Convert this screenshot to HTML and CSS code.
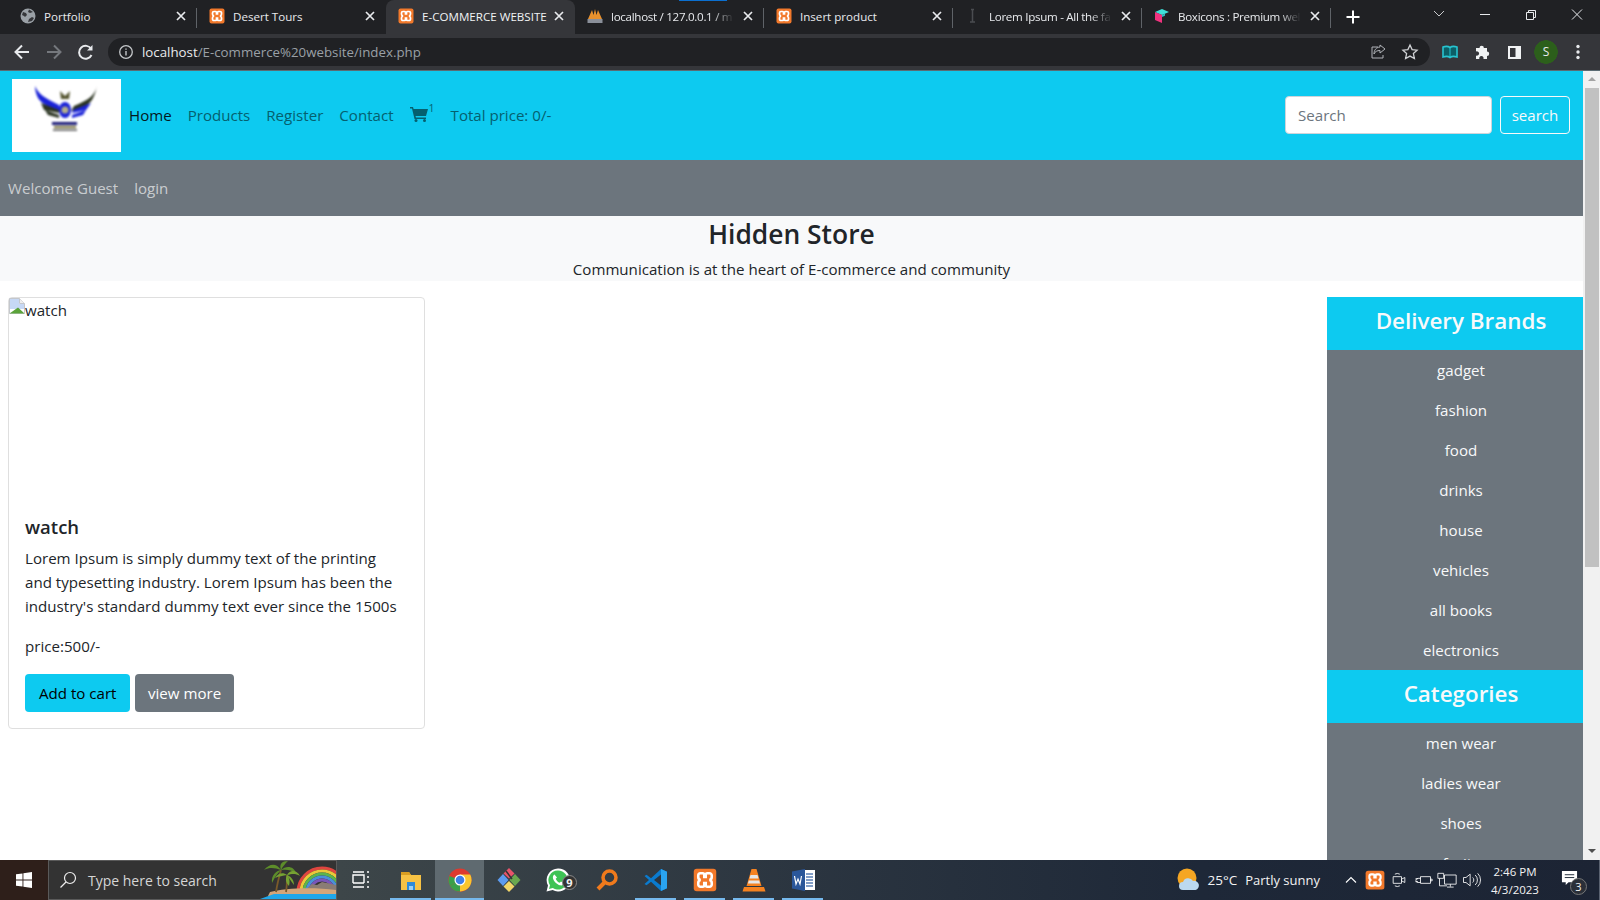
FILE: index.html
```html
<!DOCTYPE html>
<html lang="en">
<head>
  <meta charset="UTF-8">
  <title>E-COMMERCE WEBSITE</title>
  <link rel="stylesheet" href="styles.css">
</head>
<body>

  <svg class="defs" aria-hidden="true">
    <symbol id="xampp" viewBox="0 0 16 16">
      <rect x="0.5" y="0.5" width="15" height="15" rx="2" fill="#f2792b"/>
      <path d="M5 3.5h1.5a1 1 0 0 1 1 1V6h1V4.5a1 1 0 0 1 1-1H11A1.5 1.5 0 0 1 12.500 5v1a2 2 0 0 1-1.500 2a2 2 0 0 1 1.500 2v1a1.500 1.500 0 0 1-1.500 1.500H9.500a1 1 0 0 1-1-1V10h-1v1.500a1 1 0 0 1-1 1H5A1.500 1.500 0 0 1 3.500 11v-1a2 2 0 0 1 1.500-2a2 2 0 0 1-1.500-2V5A1.500 1.500 0 0 1 5 3.500z" fill="none" stroke="#fff" stroke-width="1.700"/>
    </symbol>
    <symbol id="close" viewBox="0 0 12 12">
      <path d="M2 2l8 8M10 2l-8 8" stroke="#e8eaed" stroke-width="1.700" fill="none"/>
    </symbol>
  </svg>

  <!-- browser chrome -->
  <div class="tabstrip">
    <div class="tab sep">
      <svg class="favicon" viewBox="0 0 16 16"><circle cx="8" cy="8" r="7.500" fill="#9aa0a6"/><path d="M3 4l3 1 1 2-2 2-1-1-2-1zM8 14l1-3 3-2 2 1-2 3zM9 1.500L8 4l2 1 3-1z" fill="#35363a"/></svg>
      <span class="tab-title">Portfolio</span>
      <svg class="tab-close"><use href="#close"/></svg>
    </div>
    <div class="tab">
      <svg class="favicon"><use href="#xampp"/></svg>
      <span class="tab-title">Desert Tours</span>
      <svg class="tab-close"><use href="#close"/></svg>
    </div>
    <div class="tab active">
      <svg class="favicon"><use href="#xampp"/></svg>
      <span class="tab-title">E-COMMERCE WEBSITE</span>
      <svg class="tab-close"><use href="#close"/></svg>
    </div>
    <div class="tab sep loading">
      <svg class="favicon" viewBox="0 0 16 16"><path d="M1 11L5 2l1.500 5L8 1l1.500 6L11 2l4 9z" fill="#e8912d"/><rect x="0.500" y="11" width="15" height="4" fill="#8a8f99"/></svg>
      <span class="tab-title fade">localhost / 127.0.0.1 / m</span>
      <svg class="tab-close"><use href="#close"/></svg>
    </div>
    <div class="tab sep">
      <svg class="favicon"><use href="#xampp"/></svg>
      <span class="tab-title">Insert product</span>
      <svg class="tab-close"><use href="#close"/></svg>
    </div>
    <div class="tab sep">
      <svg class="favicon" viewBox="0 0 16 16"><path d="M6 1.500h3M7.500 1.500v12.500M5 14h5" stroke="#4a4c50" stroke-width="1.500" fill="none"/></svg>
      <span class="tab-title fade">Lorem Ipsum - All the fa</span>
      <svg class="tab-close"><use href="#close"/></svg>
    </div>
    <div class="tab sep">
      <svg class="favicon" viewBox="0 0 16 16"><path d="M1 4l7-3 7 3-7 3z" fill="#3fdfd8"/><path d="M1 4l7 3v8l-7-3z" fill="#f0327e"/><path d="M8 7l3-1.300v2L8 9z" fill="#2fb9c4"/></svg>
      <span class="tab-title fade">Boxicons : Premium wel</span>
      <svg class="tab-close"><use href="#close"/></svg>
    </div>
    <svg class="new-tab" viewBox="0 0 14 14"><path d="M7 0.500v13M0.500 7h13" stroke="#fff" stroke-width="2"/></svg>
    <div class="win-controls">
      <svg viewBox="0 0 46 30"><path d="M18 11l5 5 5-5" stroke="#c8cacc" fill="none"/></svg>
      <svg viewBox="0 0 46 30"><path d="M18 14.500h10" stroke="#e8eaed" fill="none"/></svg>
      <svg viewBox="0 0 46 30"><path d="M18.500 12.500h7v7h-7zM20.500 12.500v-2h7v7h-2" stroke="#e8eaed" fill="none"/></svg>
      <svg viewBox="0 0 46 30"><path d="M18 9.500l10 10M28 9.500l-10 10" stroke="#e8eaed" fill="none"/></svg>
    </div>
  </div>

  <div class="toolbar">
    <svg class="tool" viewBox="0 0 32 32"><path d="M23 16H10M16 9.500L9.500 16l6.500 6.500" stroke="#e8eaed" stroke-width="2" fill="none"/></svg>
    <svg class="tool" viewBox="0 0 32 32"><path d="M9 16h13M16 9.500l6.500 6.500-6.500 6.500" stroke="#75787d" stroke-width="2" fill="none"/></svg>
    <svg class="tool" viewBox="0 0 32 32"><path d="M21.500 19a6.500 6.500 0 1 1-.300-6" stroke="#e8eaed" stroke-width="2" fill="none"/><path d="M22.500 9v5.500H17z" fill="#e8eaed"/></svg>
    <div class="omnibox">
      <svg class="info" viewBox="0 0 16 16"><circle cx="8" cy="8" r="6.300" stroke="#c4c7ca" stroke-width="1.300" fill="none"/><path d="M8 7v4.500M8 4.500v1.300" stroke="#c4c7ca" stroke-width="1.400"/></svg>
      <span class="url"><b>localhost</b>/E-commerce%20website/index.php</span>
      <svg class="tool" viewBox="0 0 32 32"><path d="M16 11h-6v11h11v-3" stroke="#b0b3b8" fill="none"/><path d="M18 9l5 4-5 4v-2.500c-3 0-5 1-6 3.500 0-4 2-6.500 6-7z" stroke="#b0b3b8" fill="none"/></svg>
      <svg class="tool" viewBox="0 0 32 32"><path d="M16 9l2.100 4.600 5 .600-3.700 3.400 1 5L16 20.100l-4.400 2.500 1-5-3.700-3.400 5-.600z" stroke="#d0d2d5" stroke-width="1.300" fill="none"/></svg>
    </div>
    <div class="tool-right">
      <svg class="tool" viewBox="0 0 32 32"><path d="M9 11c3-1 5-1 7 .500 2-1.500 4-1.500 7-.500v10c-3-1-5-1-7 .500-2-1.500-4-1.500-7-.500z" stroke="#27c4d0" stroke-width="1.600" fill="#0c5f66"/><path d="M16 11.500v10" stroke="#27c4d0"/></svg>
      <svg class="tool" viewBox="0 0 32 32"><path d="M10 12h3.500a2.200 2.200 0 1 1 4.400 0H21v3.500a2.200 2.200 0 1 1 0 4.400V23h-3.600a2.200 2.200 0 1 0-4 0H10v-3.500a2.200 2.200 0 1 0 0-4z" fill="#f1f3f4"/></svg>
      <svg class="tool" viewBox="0 0 32 32"><rect x="10" y="10" width="13" height="13" fill="#f1f3f4"/><rect x="12" y="12" width="5.500" height="9" fill="#35363a"/></svg>
      <span class="avatar">S</span>
      <svg class="tool" viewBox="0 0 32 32"><circle cx="16" cy="10.500" r="1.700" fill="#e8eaed"/><circle cx="16" cy="16" r="1.700" fill="#e8eaed"/><circle cx="16" cy="21.500" r="1.700" fill="#e8eaed"/></svg>
    </div>
  </div>

  <!-- the page itself -->
  <div class="viewport">
    <div class="page">
      <nav class="navbar">
        <svg class="logo" viewBox="0 0 109 73">
          <g class="logo-art">
            <path d="M23 7c3 8 10 12 24 19l2 6C38 29 30 25 26 19c-2-4-3-8-3-12z" fill="#1a22d8"/>
            <path d="M85 7c-2 9-8 14-23 20l-3 5c13-3 19-7 22-13 2-4 3-8 4-12z" fill="#2a3320"/>
            <path d="M29 24l18 7v3l-15-3zM33 31l14 5v3l-11-3z" fill="#2a3320"/>
            <path d="M79 24l-18 7-1 3 14-3zM74 31l-14 5v3l11-3z" fill="#1a22d8"/>
            <ellipse cx="53" cy="31" rx="6" ry="8" fill="#1a22d8"/>
            <circle cx="53" cy="31" r="3.500" fill="#b5b08a"/>
            <path d="M48 12l5 5 5-5-1 8h-8z" fill="#55552f"/>
            <rect x="40" y="43" width="25" height="3" fill="#1c1c78"/>
            <rect x="42" y="47" width="22" height="2" fill="#77703a"/>
            <rect x="41" y="50" width="24" height="2" fill="#777"/>
          </g>
        </svg>
        <ul class="nav-links">
          <li class="current">Home</li>
          <li>Products</li>
          <li>Register</li>
          <li>Contact</li>
          <li class="cart">
            <svg viewBox="0 0 18 16"><path d="M0 1h3l.600 2H18l-2 7H5.500L6 11.500h10V13H4.500L2 2.500H0z" fill="#05606f"/><circle cx="6" cy="14.500" r="1.500" fill="#05606f"/><circle cx="14.500" cy="14.500" r="1.500" fill="#05606f"/></svg>
            <sup>1</sup>
          </li>
          <li>Total price: 0/-</li>
        </ul>
        <form class="search-form">
          <input class="search-input" type="text" placeholder="Search">
          <button class="search-btn" type="button">search</button>
        </form>
      </nav>

      <div class="subnav">
        <span>Welcome Guest</span>
        <span>login</span>
      </div>

      <header class="hero">
        <h1>Hidden Store</h1>
        <p>Communication is at the heart of E-commerce and community</p>
      </header>

      <div class="content">
        <main class="products">
          <article class="card">
            <div class="card-img">
              <svg viewBox="0 0 16 16"><path d="M.5.500h10l5 5V15.500H.5z" fill="#fff" stroke="#c4c7cc"/><path d="M1 1h9v5h5v5H1z" fill="#c6d8f5"/><path d="M.5 15.500L9 9.500l6.500 6z" fill="#5ba33a"/><path d="M10.500.500v5h5" fill="#eee" stroke="#c4c7cc"/></svg>
              <span>watch</span>
            </div>
            <div class="card-body">
              <h5>watch</h5>
              <p class="card-text">Lorem Ipsum is simply dummy text of the printing and typesetting industry. Lorem Ipsum has been the industry's standard dummy text ever since the 1500s</p>
              <p class="price">price:500/-</p>
              <div class="card-actions">
                <a class="btn btn-info">Add to cart</a>
                <a class="btn btn-secondary">view more</a>
              </div>
            </div>
          </article>
        </main>

        <aside class="sidebar">
          <h4>Delivery Brands</h4>
          <ul>
            <li>gadget</li>
            <li>fashion</li>
            <li>food</li>
            <li>drinks</li>
            <li>house</li>
            <li>vehicles</li>
            <li>all books</li>
            <li>electronics</li>
          </ul>
          <h4>Categories</h4>
          <ul>
            <li>men wear</li>
            <li>ladies wear</li>
            <li>shoes</li>
            <li>fruits</li>
          </ul>
        </aside>
      </div>
    </div>

    <div class="scrollbar">
      <span class="arrow-up"></span>
      <span class="thumb"></span>
      <span class="arrow-down"></span>
    </div>
  </div>

  <!-- windows taskbar -->
  <footer class="taskbar">
    <div class="start">
      <svg viewBox="0 0 16 16"><path d="M0 2.300l6.500-.900v6.200H0zM7.400 1.300L16 0v7.600H7.400zM0 8.400h6.500v6.200L0 13.700zM7.400 8.400H16V16l-8.600-1.300z" fill="#fff"/></svg>
    </div>
    <div class="task-search">
      <svg class="lens" viewBox="0 0 18 18"><circle cx="11" cy="7" r="5.500" stroke="#eee" fill="none" stroke-width="1.200"/><path d="M7 11l-5.500 5.500" stroke="#eee" stroke-width="1.300"/></svg>
      <span>Type here to search</span>
      <svg class="beach" viewBox="0 0 76 38">
        <circle cx="62" cy="31" r="24" stroke="#e0453f" stroke-width="3" fill="none"/>
        <circle cx="62" cy="31" r="21" stroke="#ecc83a" stroke-width="3" fill="none"/>
        <circle cx="62" cy="31" r="18" stroke="#5cb44c" stroke-width="3" fill="none"/>
        <circle cx="62" cy="31" r="15" stroke="#4a90d9" stroke-width="3" fill="none"/>
        <circle cx="62" cy="31" r="12" stroke="#7a55b8" stroke-width="3" fill="none"/>
        <path d="M44 30l8-7 5 1 5-3 14 3v6z" fill="#8a7c75"/>
        <path d="M10 31c14-4 44-5 66-2v6H8z" fill="#d4a679"/>
        <path d="M0 38l14-5h62v5z" fill="#1fa7ea"/>
        <path d="M16 31c1-7 3-15 5-22M26 31c1-6 1-12 1-17" stroke="#7a5a2a" stroke-width="1.800" fill="none"/>
        <path d="M21 9C16 1 9 3 4 9c6-3 11-2 17 0zM21 9c-2-6 1-9 7-9-3 3-5 5-7 9zM21 9c5-5 13-4 15 3-5-3-9-4-15-3zM21 9c-5 1-10 5-9 13 3-6 5-9 9-13z" fill="#5d8d2a"/>
        <path d="M27 14c3-6 10-5 13 1-5-3-8-2-13-1zM27 14c-4-3-9-2-12 3 4-2 8-2 12-3zM27 14c-2 4-1 8 2 11 1-4 1-7-2-11zM27 14c3 1 7 4 7 10-3-4-5-7-7-10z" fill="#76a332"/>
      </svg>
    </div>
    <div class="task-apps">
      <div class="app taskview">
        <svg viewBox="0 0 24 24"><path d="M5 4h11M5 15h11M5 15V7h11v8M19 4h2M19 9h2M19 14h2M19 19h2M5 19h11" stroke="#fff" stroke-width="1.400" fill="none"/></svg>
      </div>
      <div class="app open">
        <svg viewBox="0 0 24 24"><path d="M2 4h8l2 3h10v15H2z" fill="#f6c244"/><path d="M2 4h8l2 3H2z" fill="#d99e22"/><rect x="8" y="14" width="8" height="8" fill="#2e8bd8"/><rect x="10" y="18" width="4" height="4" fill="#9bd0f5"/></svg>
      </div>
      <div class="app focused">
        <svg viewBox="0 0 24 24"><circle cx="12" cy="12" r="11.500" fill="#dd3a2f"/><path d="M12 12L2 18a11.500 11.500 0 0 0 10 5.500z" fill="#3aa04a"/><path d="M12 6.500h10.200A11.500 11.500 0 0 1 12 23.500z" fill="#fbc62e"/><path d="M12 12L2 18A11.500 11.500 0 0 1 1.500 8z" fill="#3aa04a"/><circle cx="12" cy="12" r="5.500" fill="#fff"/><circle cx="12" cy="12" r="4.300" fill="#3f7fe8"/></svg>
      </div>
      <div class="app">
        <svg viewBox="0 0 24 24"><path d="M12 0l5.500 5.500-5.500 5-5.500-5z" fill="#e8546a"/><path d="M6 6l5.500 6L6 18 .5 12z" fill="#5d9bef"/><path d="M18 6l5.500 6-5.500 6-5.500-6z" fill="#6aa84f"/><path d="M12 13l5.500 5.500L12 24l-5.500-5.500z" fill="#f2d668"/><path d="M9 3l6 8" stroke="#333" stroke-width="1.500"/></svg>
      </div>
      <div class="app">
        <svg viewBox="0 0 24 24"><path d="M12 .500a11.500 11.500 0 0 0-10 17L.500 23.500l6.200-1.500A11.500 11.500 0 1 0 12 .500z" fill="#fff"/><path d="M12 2.500a9.500 9.500 0 0 0-8 14.700l-1 3.700 3.800-1A9.500 9.500 0 1 0 12 2.500z" fill="#3ec355"/><path d="M8.500 6.500c-1 .500-2 2-1.500 4 .800 3 4 6 7 6.800 2 .500 3.500-.500 4-2l-3-1.800-1.300 1.300c-1.700-.600-3.300-2.200-4-4l1.300-1.300z" fill="#fff"/></svg>
        <span class="app-badge">9</span>
      </div>
      <div class="app">
        <svg viewBox="0 0 24 24"><circle cx="14.500" cy="9.500" r="6.500" stroke="#f07a1c" stroke-width="3.500" fill="none"/><path d="M9.500 14.500L3 21" stroke="#f07a1c" stroke-width="4"/></svg>
      </div>
      <div class="app open">
        <svg viewBox="0 0 24 24"><path d="M17 1l6 2.800v16.400L17 23 7 13.800l-4.500 3.500L.500 16l4.500-4-4.500-4 2-1.300L7 10.200z" fill="#0a7bcf"/><path d="M17 1l6 2.800v16.400L17 23z" fill="#2aa4f0"/><path d="M17 6.500L10 12l7 5.500z" fill="#2b3540"/></svg>
      </div>
      <div class="app open">
        <svg viewBox="0 0 24 24"><use href="#xampp"/></svg>
      </div>
      <div class="app open">
        <svg viewBox="0 0 24 24"><path d="M9.500 1h5l5 17h-15z" fill="#f58220"/><path d="M8.500 7h7l1 3.500h-9zM6.800 12.500h10.400l.800 3H6z" fill="#e6e6e6"/><path d="M2 19h20l1.500 4.500H.5z" fill="#f58220"/></svg>
      </div>
      <div class="app open">
        <svg viewBox="0 0 24 24"><rect x="9" y="2" width="15" height="20" fill="#fff"/><path d="M15 6h7M15 9h7M15 12h7M15 15h7M15 18h7" stroke="#5a7fb5" stroke-width="1.300"/><path d="M1 3.500L14 1v22L1 20.500z" fill="#2b579a"/><path d="M3.500 8l1.500 8 2-5 2 5 1.500-8" stroke="#fff" stroke-width="1.200" fill="none"/></svg>
      </div>
    </div>

    <div class="tray">
      <svg class="weather" viewBox="0 0 24 24"><circle cx="11" cy="10" r="9.500" fill="#f5a623"/><path d="M7 22a4 4 0 0 1 0-8 5.500 5.500 0 0 1 10-1 4.500 4.500 0 0 1 2.500 9z" fill="#bcd9ef"/></svg>
      <span class="temp">25°C</span>
      <span class="forecast">Partly sunny</span>
      <div class="tray-icons">
        <svg viewBox="0 0 24 24"><path d="M6 15l6-6 6 6" stroke="#fff" stroke-width="1.300" fill="none"/></svg>
        <svg viewBox="0 0 24 24"><use href="#xampp"/></svg>
        <svg viewBox="0 0 24 24"><path d="M5 8h10v8H5zM15 11l4-2v6l-4-2zM7 5a6 6 0 0 1 6 0M7 19a6 6 0 0 0 6 0" stroke="#fff" fill="none"/></svg>
        <svg viewBox="0 0 24 24"><path d="M9 8h12v8H9zM21 11h2v2h-2zM9 10H6a2 2 0 0 0 0 5h3M3 10.500h3M3 14h3" stroke="#fff" fill="none"/></svg>
        <svg viewBox="0 0 24 24"><path d="M9 6h14v11H9zM1 4h7v6H1zM3 10v9h9M16 17v3M12 20.500h8" stroke="#fff" fill="none"/></svg>
        <svg viewBox="0 0 24 24"><path d="M3 9h3l5-4v14l-5-4H3zM14 9a4 4 0 0 1 0 6M17 6a8 8 0 0 1 0 12M20 4a11 11 0 0 1 0 16" stroke="#fff" fill="none"/></svg>
      </div>
      <div class="clock">
        <span>2:46 PM</span>
        <span>4/3/2023</span>
      </div>
      <div class="notify">
        <svg viewBox="0 0 18 18"><path d="M1 1h16v12H8l-3 3v-3H1z" fill="#fff"/><path d="M4 5h10M4 8h10" stroke="#1c2635"/></svg>
        <span class="notify-count">3</span>
      </div>
    </div>
  </footer>

</body>
</html>
```

FILE: styles.css
```css
* { box-sizing: border-box; }

html, body { height: 100%; }

body {
  margin: 0;
  width: 1600px;
  height: 900px;
  overflow: hidden;
  display: flex;
  flex-direction: column;
  font-family: "Open Sans", "Noto Sans", sans-serif;
  font-size: 15.100px;
  color: #212529;
  background: #fff;
}

.defs { width: 0; height: 0; position: absolute; }

ul { list-style: none; margin: 0; padding: 0; }

/* tabs */
.tabstrip {
  height: 34px;
  flex: none;
  display: flex;
  align-items: flex-end;
  padding-left: 8px;
  background: #202124;
}

.tab {
  position: relative;
  width: 189px;
  height: 34px;
  flex: none;
  display: flex;
  align-items: center;
  gap: 8px;
  padding: 0 10px 2px 12px;
  color: #e8eaed;
  font-size: 11.600px;
}

.tab.active { background: #35363a; border-radius: 8px 8px 0 0; color: #f1f3f4; }

.sep::after {
  content: "";
  position: absolute;
  right: 0;
  top: 8px;
  height: 20px;
  width: 1px;
  background: #5f6368;
}

.loading::before {
  content: "";
  position: absolute;
  left: 104px;
  top: 0;
  width: 48px;
  height: 1px;
  background: #0b6fd0;
}

.favicon { width: 16px; height: 16px; flex: none; }

.tab-title { flex: 1; min-width: 0; white-space: nowrap; }

.fade {
  letter-spacing: -0.300px;
  -webkit-mask-image: linear-gradient(to right, #000 82%, transparent 100%);
  mask-image: linear-gradient(to right, #000 82%, transparent 100%);
}

.tab-close { width: 12px; height: 12px; flex: none; }

.new-tab { width: 14px; height: 14px; margin: 0 0 10px 15px; flex: none; }

.win-controls {
  margin-left: auto;
  align-self: flex-start;
  display: flex;
}

.win-controls svg { width: 46px; height: 30px; display: block; }

/* address bar */
.toolbar {
  height: 37px;
  flex: none;
  display: flex;
  align-items: center;
  padding: 0 6px 1px 6px;
  background: #35363a;
  border-bottom: 1px solid #5b6b73;
}

.tool { width: 32px; height: 32px; flex: none; }

.omnibox {
  width: 1322px;
  height: 28px;
  margin-left: 6px;
  display: flex;
  align-items: center;
  padding: 0 4px 0 10px;
  border-radius: 14px;
  background: #202124;
}

.info { width: 16px; height: 16px; flex: none; }

.url { flex: 1; margin-left: 8px; font-size: 13.300px; color: #9aa0a6; }

.url b { font-weight: 400; color: #e8eaed; }

.tool-right { display: flex; align-items: center; margin-left: 4px; }

.avatar {
  width: 32px;
  height: 24px;
  display: flex;
  align-items: center;
  justify-content: center;
  font-size: 12px;
  color: #e8eaed;
  background: radial-gradient(circle at center, #2c5f1b 0, #2c5f1b 11.500px, transparent 12px);
}

/* page */
.viewport { flex: 1; min-height: 0; display: flex; }

.page { flex: 1; min-width: 0; overflow: hidden; }

.navbar {
  height: 89px;
  display: flex;
  align-items: center;
  padding: 0 13px 0 12px;
  background: #0dcaf0;
}

.logo { width: 109px; height: 73px; flex: none; background: #fff; }

.logo-art { filter: blur(0.800px); }

.nav-links { display: flex; align-items: center; margin-top: -2px; }

.nav-links li { padding: 8px; color: #05606f; line-height: 24px; }

.nav-links .current { color: #04181d; }

.cart { display: flex; align-items: center; }

.cart svg { width: 18px; height: 16px; margin-top: -2px; }

.cart sup { font-size: 10.500px; line-height: 1; margin: -12px 0 0 1px; }

.search-form { margin: -2px 0 0 auto; display: flex; gap: 8px; }

.search-input {
  width: 207px;
  height: 38px;
  padding: 6px 12px;
  border: 1px solid #ced4da;
  border-radius: 4px;
  font: inherit;
  background: #fff;
}

.search-input::placeholder { color: #6c757d; }

.search-btn {
  width: 70px;
  height: 38px;
  padding: 0;
  border: 1px solid #f8f9fa;
  border-radius: 4px;
  font: inherit;
  color: #f8f9fa;
  background: transparent;
}

.subnav {
  height: 56px;
  display: flex;
  align-items: center;
  gap: 16px;
  padding-left: 8px;
  color: rgba(255, 255, 255, 0.65);
  background: #6c757d;
}

.hero { height: 65px; text-align: center; background: #f8f9fa; }

.hero h1 { margin: 0; font-size: 26.400px; line-height: 36px; font-weight: 600; }

.hero p { margin: 5px 0 0; line-height: 24px; }

.content { display: flex; padding-top: 16px; align-items: flex-start; }

.products { flex: 1; padding-left: 8px; }

.card {
  width: 417px;
  height: 432px;
  display: flex;
  flex-direction: column;
  border: 1px solid #dfdfdf;
  border-radius: 4px;
}

.card-img { height: 201px; flex: none; display: flex; color: #212529; line-height: 24px; }

.card-img svg { width: 16px; height: 16px; flex: none; }

.card-body { padding: 16px; }

.card-body h5 { margin: 0 0 7px; font-size: 18.500px; line-height: 24px; font-weight: 600; }

.card-text { max-width: 373px; margin: 0 0 16px; line-height: 24px; }

.price { margin: 0 0 16px; line-height: 24px; }

.card-actions { display: flex; gap: 5px; }

.btn {
  height: 38px;
  display: flex;
  align-items: center;
  border-radius: 4px;
}

.btn-info { padding: 0 14px; background: #0dcaf0; color: #000; }

.btn-secondary { padding: 0 12.500px; background: #6c757d; color: #fff; }

.sidebar {
  width: 256px;
  flex: none;
  text-align: center;
  color: #f8f9fa;
  background: #6c757d;
}

.sidebar h4 {
  height: 53px;
  margin: 0;
  padding-left: 12px;
  font-size: 22.400px;
  line-height: 47px;
  font-weight: 600;
  background: #0dcaf0;
}

.sidebar li { height: 40px; padding-left: 12px; line-height: 40px; }

.scrollbar {
  width: 17px;
  flex: none;
  display: flex;
  flex-direction: column;
  align-items: center;
  background: #f1f1f1;
}

.arrow-up {
  margin-top: 6px;
  border: 4px solid transparent;
  border-top: 0;
  border-bottom: 4px solid #a3a3a3;
}

.thumb { width: 14px; height: 479px; margin-top: 7px; background: #c1c1c1; }

.arrow-down {
  margin-top: auto;
  margin-bottom: 7px;
  border: 4px solid transparent;
  border-bottom: 0;
  border-top: 4px solid #505050;
}

/* taskbar */
.taskbar {
  height: 40px;
  flex: none;
  display: flex;
  align-items: stretch;
  color: #f3f3f3;
  background: linear-gradient(to right, #3d4649 340px, #2b3540 800px, #1e2838 1200px, #1c2434);
}

.start {
  width: 48px;
  flex: none;
  display: flex;
  align-items: center;
  justify-content: center;
  background: #2e1f1a;
}

.start svg { width: 16px; height: 16px; }

.task-search {
  width: 289px;
  flex: none;
  display: flex;
  align-items: center;
  overflow: hidden;
  border: 1px solid #5a5a5a;
  color: #d6d6d6;
  background: #333;
  font-size: 14px;
}

.lens { width: 18px; height: 18px; margin-left: 10px; flex: none; }

.task-search span { margin-left: 11px; white-space: nowrap; }

.beach { width: 76px; height: 38px; margin-left: auto; flex: none; }

.task-apps { display: flex; }

.app {
  position: relative;
  width: 49px;
  display: flex;
  align-items: center;
  justify-content: center;
}

.app > svg { width: 24px; height: 24px; }

.taskview > svg { margin-right: 3px; }

.app.focused { background: #5f6a70; }

.open::after, .focused::after {
  content: "";
  position: absolute;
  left: 4px;
  right: 4px;
  bottom: 0;
  height: 2px;
  background: #76b9ed;
}

.focused::after { left: 0; right: 0; }

.app-badge {
  position: absolute;
  left: 29px;
  top: 15px;
  width: 15px;
  height: 15px;
  display: flex;
  align-items: center;
  justify-content: center;
  font-size: 11px;
  font-weight: 700;
  border: 1px solid #888;
  border-radius: 50%;
  background: #333;
}

.tray { margin-left: auto; display: flex; align-items: center; padding-right: 6px; border-right: 1px solid #5a6270; }

.weather { width: 24px; height: 24px; flex: none; }

.temp { margin-left: 7px; font-size: 13.500px; }

.forecast { margin-left: 8px; font-size: 13px; }

.tray-icons { display: flex; margin-left: 19px; }

.tray-icons svg { width: 24px; height: 20px; }

.clock {
  width: 60px;
  margin-left: 2px;
  display: flex;
  flex-direction: column;
  align-items: center;
  justify-content: center;
  gap: 3px;
  font-size: 11.500px;
  line-height: 15px;
}

.notify { position: relative; width: 48px; display: flex; justify-content: center; align-items: center; height: 100%; }

.notify svg { width: 17px; height: 17px; margin-top: -4px; }

.notify-count {
  position: absolute;
  left: 25px;
  top: 18px;
  width: 17px;
  height: 17px;
  display: flex;
  align-items: center;
  justify-content: center;
  font-size: 11px;
  border: 1px solid #777;
  border-radius: 50%;
  background: #2a2f38;
}
```
